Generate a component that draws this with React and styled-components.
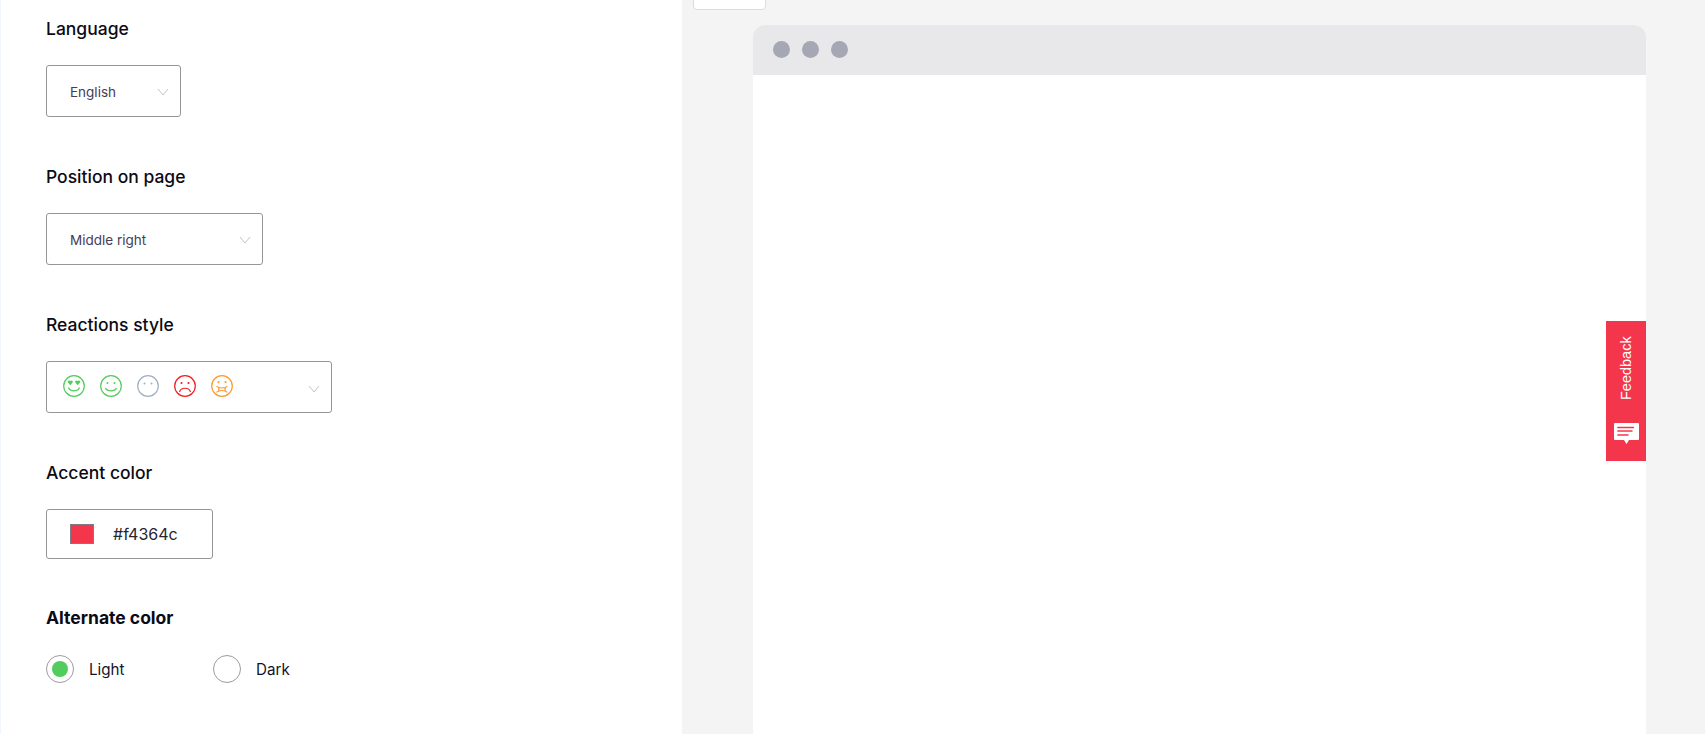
import React from 'react';
import styled, { createGlobalStyle } from 'styled-components';

const Global = createGlobalStyle`
  html, body { margin: 0; padding: 0; height: 100%; overflow: hidden; background: #fff; }
  body { font-family: "Inter", "Noto Sans", sans-serif; }
  #root { height: 100%; }
`;

const Page = styled.div`
  display: flex;
  width: 1705px;
  height: 734px;
  overflow: hidden;
`;

const Settings = styled.div`
  width: 682px;
  flex: none;
  box-sizing: border-box;
  padding: 18px 0 0 46px;
  background: #fff;
  border-left: 1px solid #f0f6fc;
`;

const Field = styled.div`
  margin-bottom: ${p => p.$gap}px;
`;

const Label = styled.div`
  font-size: 17.5px;
  font-weight: ${p => (p.$bold ? 700 : 500)};
  line-height: 22px;
  height: 22px;
  color: #0b0b16;
  margin: 0 0 ${p => p.$below ?? 25}px -1px;
`;

const SelectBox = styled.div`
  box-sizing: border-box;
  width: ${p => p.$width}px;
  height: 52px;
  margin-left: -1px;
  border: 1px solid #969696;
  border-radius: 3px;
  display: flex;
  align-items: center;
  justify-content: space-between;
  padding: 2px 11px 0 23px;
  font-size: 13.5px;
  color: #453d58;
`;

const Chevron = styled.svg`
  width: 12px;
  height: 8px;
  flex: none;
  fill: none;
  stroke: #c4c4c4;
  stroke-width: 1;
  margin-top: ${p => p.$top ?? 0}px;
`;

const Faces = styled.div`
  display: flex;
  gap: 15px;
  margin-left: -7px;
  margin-top: -4px;
`;

const FaceIcon = styled.svg`
  width: 22px;
  height: 22px;
  display: block;
  fill: none;
  stroke-width: 1.2;
`;

const ColorBox = styled(SelectBox)`
  height: 50px;
  justify-content: flex-start;
  gap: 19px;
  padding: 0 0 0 23px;
  font-size: 16px;
  color: #26262e;
`;

const Swatch = styled.span`
  width: 24px;
  height: 20px;
  box-sizing: border-box;
  border: 1px solid #7d7d85;
  background: #f4364c;
`;

const Radios = styled.div`
  display: flex;
  margin-left: -1px;
`;

const RadioItem = styled.div`
  display: flex;
  align-items: center;
  gap: 15px;
  width: 167px;
  font-size: 15.2px;
  color: #14142a;
`;

const RadioDot = styled.span`
  width: 28px;
  height: 28px;
  box-sizing: border-box;
  border: 1px solid #9c9c9c;
  border-radius: 50%;
  display: flex;
  align-items: center;
  justify-content: center;
  &::after {
    content: '';
    width: 16px;
    height: 16px;
    border-radius: 50%;
    background: ${p => (p.$on ? '#52cc5c' : 'transparent')};
  }
`;

const Preview = styled.div`
  flex: 1;
  background: #f4f4f4;
  padding: 0 59px 0 71px;
  position: relative;
`;

const TabButton = styled.div`
  position: absolute;
  left: 11px;
  top: -19px;
  width: 73px;
  height: 29px;
  box-sizing: border-box;
  background: #fff;
  border: 1px solid #dcdcdc;
  border-radius: 4px;
`;

const Browser = styled.div`
  margin-top: 25px;
  height: 709px;
  background: #fff;
  border-radius: 12px 12px 0 0;
  overflow: hidden;
  position: relative;
`;

const BrowserBar = styled.div`
  height: 50px;
  box-sizing: border-box;
  padding: 0 0 2px 20px;
  background: #e8e8ea;
  display: flex;
  align-items: center;
  gap: 12px;
`;

const Dot = styled.span`
  width: 17px;
  height: 17px;
  border-radius: 50%;
  background: #a6a7b4;
`;

const FeedbackTab = styled.div`
  position: absolute;
  right: 0;
  top: 296px;
  width: 40px;
  height: 140px;
  background: #f4364c;
  display: flex;
  flex-direction: column;
  align-items: center;
  color: #fff;
`;

const FeedbackText = styled.span`
  writing-mode: vertical-rl;
  transform: rotate(180deg);
  font-family: "Liberation Sans", sans-serif;
  font-size: 14.5px;
  margin-top: 16px;
  height: 63px;
  line-height: 14px;
  white-space: nowrap;
`;

const FeedbackIcon = styled.svg`
  width: 25px;
  height: 21px;
  margin-top: 23px;
`;

const Face = ({ color, children }) => (
  <FaceIcon viewBox="0 0 22 22" stroke={color}>
    <circle cx="11" cy="11" r="10.3" />
    {children}
  </FaceIcon>
);

const Eyes = ({ color, y, r }) => (
  <>
    <circle cx="7.5" cy={y} r={r} fill={color} stroke="none" />
    <circle cx="14.5" cy={y} r={r} fill={color} stroke="none" />
  </>
);

const Caret = ({ top }) => (
  <Chevron $top={top} viewBox="0 0 12 8"><path d="M1 1l5 6 5-6" /></Chevron>
);

export default function App() {
  return (
    <Page>
      <Global />
      <Settings>
        <Field $gap={49}>
          <Label>Language</Label>
          <SelectBox $width={135}>
            English
            <Caret />
          </SelectBox>
        </Field>
        <Field $gap={49}>
          <Label>Position on page</Label>
          <SelectBox $width={217}>
            Middle right
            <Caret />
          </SelectBox>
        </Field>
        <Field $gap={49}>
          <Label>Reactions style</Label>
          <SelectBox $width={286}>
            <Faces>
              <Face color="#52cc5c">
                <path d="M7.3 6C6.3 4.7 4.3 5.6 4.8 7.3L7.3 10.2 9.8 7.3C10.3 5.6 8.3 4.7 7.3 6zM14.7 6C13.7 4.7 11.7 5.6 12.2 7.3L14.7 10.2 17.2 7.3C17.7 5.6 15.7 4.7 14.7 6z" fill="#52cc5c" stroke="none" />
                <path d="M5.5 12.5c1.5 4.5 9.5 4.5 11 0" />
              </Face>
              <Face color="#52cc5c">
                <Eyes color="#52cc5c" y={8} r={1} />
                <path d="M5.5 13c1.5 3.8 9.5 3.8 11 0" />
              </Face>
              <Face color="#9fb0c4">
                <Eyes color="#9fb0c4" y={8.5} r={1} />
              </Face>
              <Face color="#f51c24">
                <Eyes color="#f51c24" y={8} r={1.1} />
                <path d="M5.5 17c1.5-5 9.5-5 11 0" />
              </Face>
              <Face color="#fb9a33">
                <Eyes color="#fb9a33" y={7} r={1.1} />
                <path d="M5.5 11.2c1.5 1.5 3 1.8 5.5 1.8s4-.3 5.5-1.8M5.5 17.3c1.5-1.5 3-1.8 5.5-1.8s4 .3 5.5 1.8M7.5 12.7c.6.9.6 2 0 3M14.5 12.7c-.6.9-.6 2 0 3" />
              </Face>
            </Faces>
            <Caret top={2} />
          </SelectBox>
        </Field>
        <Field $gap={48}>
          <Label>Accent color</Label>
          <ColorBox $width={167}>
            <Swatch />
            #f4364c
          </ColorBox>
        </Field>
        <Field $gap={0}>
          <Label $bold $below={26}>Alternate color</Label>
          <Radios>
            <RadioItem><RadioDot $on />Light</RadioItem>
            <RadioItem><RadioDot />Dark</RadioItem>
          </Radios>
        </Field>
      </Settings>
      <Preview>
        <TabButton />
        <Browser>
          <BrowserBar><Dot /><Dot /><Dot /></BrowserBar>
          <FeedbackTab>
            <FeedbackText>Feedback</FeedbackText>
            <FeedbackIcon viewBox="0 0 25 21">
              <path d="M1 0h23a1 1 0 0 1 1 1v15a1 1 0 0 1-1 1h-9l-2.5 4-2.5-4H1a1 1 0 0 1-1-1V1a1 1 0 0 1 1-1z" fill="#fff" />
              <path d="M3.3 4.5h16.7M3.3 8h15.2M3.3 12h11.2" stroke="#f4364c" strokeWidth="1.3" />
            </FeedbackIcon>
          </FeedbackTab>
        </Browser>
      </Preview>
    </Page>
  );
}
